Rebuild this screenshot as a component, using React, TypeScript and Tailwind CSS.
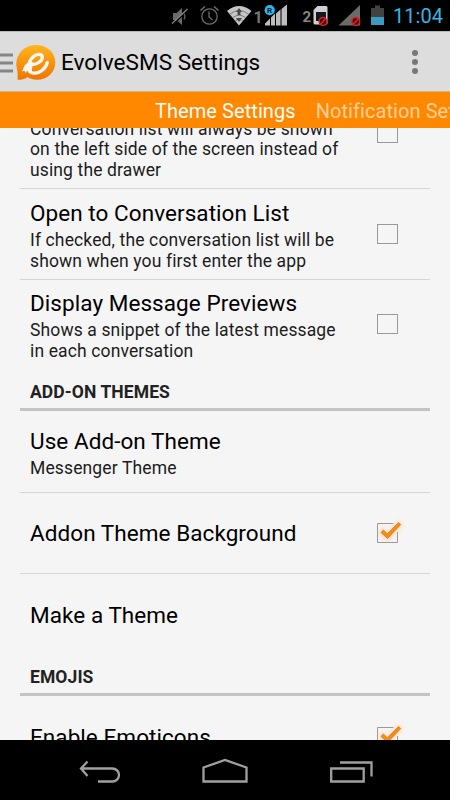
import React from "react";

function StatusBar() {
  return (
    <div className="h-[31px] shrink-0 bg-black">
      <svg width="450" height="31" viewBox="0 0 450 31" className="block">
        <path d="M173 13h3.500l5.500-5v17l-5.500-5H173z" fill="#6a6a6a" />
        <path d="M172.500 25L188.500 9.500" stroke="#000" strokeWidth="1.500" />
        <path d="M172 23.500L187.500 9" stroke="#858585" strokeWidth="1.300" />
        <path d="M184 13.500q2 3 0 6" stroke="#5c5c5c" strokeWidth="1.300" fill="none" />
        <g stroke="#6c6c6c" strokeWidth="1.300" fill="none">
          <circle cx="209.500" cy="16.500" r="7.700" />
          <path d="M209 11.500v5.500l3.500 3" />
          <path d="M200.500 10.500l4.500-4M218.500 10.500l-4.500-4" strokeWidth="1.600" />
        </g>
        <path d="M227 11Q239 1 251.500 11L239 25.500z" fill="#c6c6c6" />
        <g fill="none" stroke="#7a7a7a" strokeWidth="1">
          <path d="M230 14Q239 7 248.500 14M233 17.500Q239 13 245.500 17.500M235.500 20.500Q239 18 242.500 20.500" />
        </g>
        <path d="M239 8l3 4h-1.500v3h-3v-3H236zM239 22l3-4h-6z" fill="#4a4a4a" />
        <text x="253.500" y="23" fontFamily="Roboto, sans-serif" fontWeight="700" fontSize="16" fill="#777">1</text>
        <path d="M265 25.500v-2l5-5v7zM271 25.500v-8l4-4v12zM276 25.500V13.500l4.500-4v16zM281.500 25.500V9l5.500-4.500v21z" fill="#bebebe" />
        <circle cx="269.700" cy="10.200" r="5.100" fill="#2fb6ea" />
        <text x="267" y="13.200" fontFamily="Roboto, sans-serif" fontWeight="700" fontSize="8" fill="#06202c">R</text>
        <text x="302.500" y="22.300" fontFamily="Roboto, sans-serif" fontWeight="700" fontSize="15" fill="#858585">2</text>
        <path d="M313.500 10l4-4H326a1.500 1.500 0 0 1 1.500 1.500V23a1.500 1.500 0 0 1-1.500 1.500h-11a1.500 1.500 0 0 1-1.500-1.500z" fill="#d0d0d0" />
        <path d="M316 12h10v9h-10z" fill="#111b1f" />
        <path d="M338.500 25.500L360 5v20.500z" fill="#6b6b6b" />
        <g fill="#3b0b0d" stroke="#dc2027" strokeWidth="1.500">
          <circle cx="323" cy="21.500" r="3.900" />
          <path d="M320.400 24.100l5.200-5.200" />
          <circle cx="355.800" cy="21.500" r="3.900" />
          <path d="M353.200 24.100l5.200-5.200" />
        </g>
        <path d="M371 8h4V5.500h5V8h4v9.500h-13z" fill="#424242" />
        <path d="M371 17h13v8h-13z" fill="#3b9cc2" />
        <text x="393" y="23.300" fontFamily="Roboto, sans-serif" fontSize="20" fill="#33b5e5" textLength="50">11:04</text>
      </svg>
    </div>
  );
}

function Header() {
  return (
    <div className="flex h-[60px] shrink-0 items-center border-t border-[#b9b9b9] bg-[#dddddd]">
      <svg width="57" height="58" viewBox="0 32 57 58" className="shrink-0">
        <defs>
          <linearGradient id="logo" x1="0" y1="0" x2="0" y2="1">
            <stop offset="0" stopColor="#ffb51d" />
            <stop offset="1" stopColor="#f17400" />
          </linearGradient>
        </defs>
        <path d="M0 52.500h13v3H0zM0 60.500h13v3H0zM0 68.500h13v3H0z" fill="#858585" />
        <path d="M17.500 78.500C18 74.500 17.500 71 16.700 66.500 14.500 54 24 44 36 44c11 0 19.300 7.500 19.300 17.500S47 78.800 37 78.800c-4 0-7-1-9.500-2.800-3 2.500-6.500 3-10 2.500z" fill="url(#logo)" />
        <path d="M32 63.500c5 0 10.500-3.500 10.300-7.500-.3-3.500-5.800-3.500-9.300 0-5 5-6.500 14.500-.5 16 6 1.300 13-3.500 14.800-10.500" fill="none" stroke="#fff8f2" strokeWidth="3.300" strokeLinecap="round" />
        <path d="M22 70.500l2.500-6 4.500-4 4 1-1.500 9.500-2-2-.5 3-2-2.800-1 3-1.500-2.500z" fill="#fff8f2" />
      </svg>
      <h1 className="ml-1 flex-1 whitespace-nowrap text-[22.5px] leading-[28px] tracking-[0.05px] text-black">EvolveSMS Settings</h1>
      <div className="mr-8 flex flex-col gap-[3px]">
        <i className="size-[6px] rounded-full bg-[#787878]" />
        <i className="size-[6px] rounded-full bg-[#787878]" />
        <i className="size-[6px] rounded-full bg-[#787878]" />
      </div>
    </div>
  );
}

function Tabs() {
  return (
    <div className="flex h-[37px] shrink-0 items-center gap-5 overflow-hidden whitespace-nowrap border-t border-[#e2b27a] bg-[#ff8800] pl-[155px] pt-[2px] text-[20px] leading-6 tracking-[0.07px]">
      <span className="shrink-0 text-white">Theme Settings</span>
      <span className="shrink-0 text-[#ffd09a]">Notification Settings</span>
    </div>
  );
}

function CheckBox({ checked = false }: { checked?: boolean }) {
  return (
    <svg width="34" height="32" viewBox="0 0 34 32" className="mr-5 shrink-0">
      {checked ? (
        <>
          <path d="M17.500 6.500h-16v19h20V15" fill="none" stroke="#999" />
          <path d="M6 15l5.500 5L22.500 8" fill="none" stroke="#ffbd78" strokeWidth="7" strokeLinecap="round" opacity="0.450" className="blur-[2px]" />
          <path d="M5 15.500l2.300-2.600 4.100 3.800L22.500 5.500l2.300 2L11.500 21.500z" fill="#ff8a0a" stroke="#b77b3c" strokeWidth="0.700" />
        </>
      ) : (
        <rect x="1.500" y="6.500" width="20" height="19" fill="none" stroke="#999" />
      )}
    </svg>
  );
}

type RowProps = { title: string; lines?: string[]; className: string; check?: boolean; checked?: boolean };

function Row({ title, lines = [], className, check, checked }: RowProps) {
  return (
    <div className={"mx-5 flex shrink-0 items-center pl-[10px] " + className}>
      <div className="flex-1 whitespace-nowrap">
        <div className="text-[22.5px] leading-[27px] tracking-[0.06px] text-black">{title}</div>
        {lines.length > 0 && (
          <div className="-mb-[3px] mt-[3px] text-[17.5px] leading-[20.5px] tracking-[0.13px] text-[#1c1c1c]">
            {lines.map((line) => (
              <div key={line}>{line}</div>
            ))}
          </div>
        )}
      </div>
      {check && <CheckBox checked={checked} />}
    </div>
  );
}

function Section({ title, className }: { title: string; className: string }) {
  return (
    <div className={"mx-5 flex shrink-0 items-center border-b-[3px] border-[#c4c4c4] pl-[10px] pt-[5px] text-[17.5px] font-bold tracking-[0.1px] text-[#222] " + className}>
      {title}
    </div>
  );
}

function NavBar() {
  return (
    <div className="h-[60px] shrink-0 bg-black">
      <svg width="450" height="60" viewBox="0 0 450 60" fill="none" stroke="#a0a0a0" strokeWidth="2.300" className="block">
        <path d="M98 41.500h14.500a6.200 6.200 0 0 0 0-13H81M87.500 21.500L81 28.500l6.500 7.500" />
        <path d="M203.500 41.500V27.500L225 20l21.500 7.500v14z" />
        <path d="M331.200 28.500h32.500v13h-32.500zM340 22.500h31.500v14" />
      </svg>
    </div>
  );
}

export default function App() {
  return (
    <div className="flex h-[800px] w-[450px] flex-col overflow-hidden bg-[#f5f5f5] font-['Roboto',sans-serif]">
      <StatusBar />
      <Header />
      <Tabs />
      <div className="flex min-h-0 flex-1 flex-col justify-start overflow-hidden">
        <div className="-mt-[50px] flex flex-col">
          <Row className="h-[111px] border-b border-[#d6d6d6]" title="Always Show List" lines={["Conversation list will always be shown", "on the left side of the screen instead of", "using the drawer"]} check />
          <Row className="h-[91px] border-b border-[#d6d6d6]" title="Open to Conversation List" lines={["If checked, the conversation list will be", "shown when you first enter the app"]} check />
          <Row className="h-[91px] pb-[3px]" title="Display Message Previews" lines={["Shows a snippet of the latest message", "in each conversation"]} check />
          <Section className="h-[40px]" title="ADD-ON THEMES" />
          <Row className="h-[82px] border-b border-[#d6d6d6]" title="Use Add-on Theme" lines={["Messenger Theme"]} />
          <Row className="h-[81px] border-b border-[#d6d6d6]" title="Addon Theme Background" check checked />
          <Row className="h-[82px]" title="Make a Theme" />
          <Section className="h-[40px]" title="EMOJIS" />
          <Row className="h-[82px]" title="Enable Emoticons" check checked />
        </div>
      </div>
      <NavBar />
    </div>
  );
}
